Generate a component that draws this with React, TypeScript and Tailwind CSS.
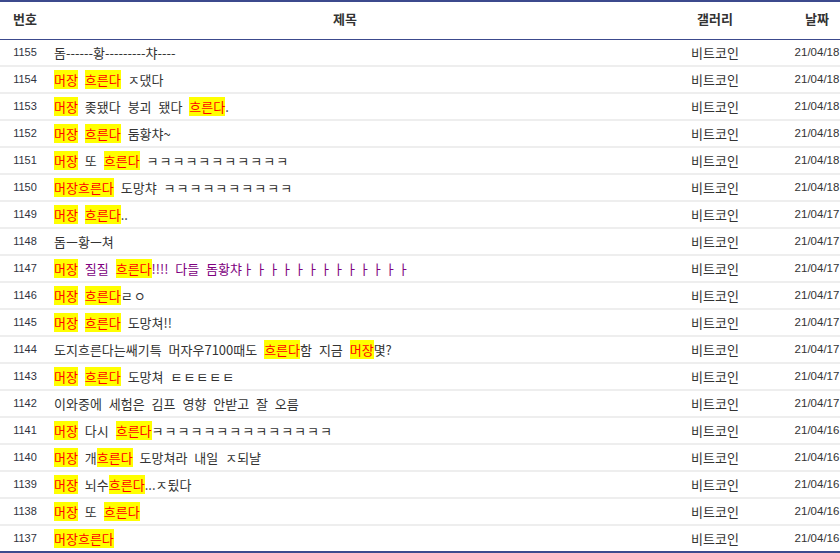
import React from 'react'

type Post = { no: number; title: string; date: string; color?: string }

// [..] 안은 하이라이트
const posts: Post[] = [
  { no: 1155, title: '돔------황---------챠----', date: '21/04/18' },
  { no: 1154, title: '[머장] [흐른다] ㅈ댔다', date: '21/04/18' },
  { no: 1153, title: '[머장] 좆됐다 붕괴 됐다 [흐른다].', date: '21/04/18' },
  { no: 1152, title: '[머장] [흐른다] 둠황챠~', date: '21/04/18' },
  { no: 1151, title: '[머장] 또 [흐른다] ㅋㅋㅋㅋㅋㅋㅋㅋㅋㅋㅋ', date: '21/04/18' },
  { no: 1150, title: '[머장흐른다] 도망챠 ㅋㅋㅋㅋㅋㅋㅋㅋㅋㅋ', date: '21/04/18' },
  { no: 1149, title: '[머장] [흐른다]..', date: '21/04/17' },
  { no: 1148, title: '돔ㅡ황ㅡ쳐', date: '21/04/17' },
  { no: 1147, title: '[머장] 질질 [흐른다]!!!! 다들 돔황챠ㅏㅏㅏㅏㅏㅏㅏㅏㅏㅏㅏㅏㅏ', date: '21/04/17', color: 'purple' },
  { no: 1146, title: '[머장] [흐른다]ㄹㅇ', date: '21/04/17' },
  { no: 1145, title: '[머장] [흐른다] 도망쳐!!', date: '21/04/17' },
  { no: 1144, title: '도지흐른다는쌔기특 머자우7100때도 [흐른다]함 지금 [머장]몇?', date: '21/04/17' },
  { no: 1143, title: '[머장] [흐른다] 도망쳐 ㅌㅌㅌㅌㅌ', date: '21/04/17' },
  { no: 1142, title: '이와중에 세험은 김프 영향 안받고 잘 오름', date: '21/04/17' },
  { no: 1141, title: '[머장] 다시 [흐른다]ㅋㅋㅋㅋㅋㅋㅋㅋㅋㅋㅋㅋㅋㅋ', date: '21/04/16' },
  { no: 1140, title: '[머장] 개[흐른다] 도망쳐라 내일 ㅈ되냘', date: '21/04/16' },
  { no: 1139, title: '[머장] 뇌수[흐른다]...ㅈ됬다', date: '21/04/16' },
  { no: 1138, title: '[머장] 또 [흐른다]', date: '21/04/16' },
  { no: 1137, title: '[머장흐른다]', date: '21/04/16' },
]

// 자모 연속(ㅋㅋㅋ, ㅏㅏㅏ)은 원본 글꼴처럼 조금 넓게
function Plain({ text }: { text: string }) {
  const runs = text.split(/([ㄱ-ㅎㅏ-ㅣ]{2,})/).filter(Boolean)
  return (
    <>
      {runs.map((r, i) =>
        /^[ㄱ-ㅎㅏ-ㅣ]{2,}$/.test(r) ? (
          <span key={i} className="tracking-[1px]">
            {r}
          </span>
        ) : (
          <span key={i}>{r}</span>
        )
      )}
    </>
  )
}

function Title({ text }: { text: string }) {
  const parts = text.split(/(\[[^\]]+\])/).filter(Boolean)
  return (
    <>
      {parts.map((p, i) =>
        p.startsWith('[') ? (
          <span key={i} className="bg-[#ffff00] text-[#ff0000]">
            {p.slice(1, -1)}
          </span>
        ) : (
          <Plain key={i} text={p} />
        )
      )}
    </>
  )
}

export default function App() {
  return (
    <div className="w-[840px] h-[553px] overflow-hidden bg-white font-['Noto_Sans_CJK_KR',sans-serif] text-[#333]">
      <div className="grid h-[40px] grid-cols-[50px_590px_150px_50px] items-center border-t-2 border-b border-[#3c4a8d] pb-[3px] text-[13px] font-bold text-[#333]">
        <div className="text-center">번호</div>
        <div className="text-center">제목</div>
        <div className="text-center">갤러리</div>
        <div className="pl-1 text-center">날짜</div>
      </div>
      {posts.map((p, i) => (
        <div
          key={p.no}
          className={
            i === posts.length - 1
              ? 'grid h-[27px] grid-cols-[50px_590px_150px_50px] items-center border-b-2 border-[#3c4a8d]'
              : 'grid h-[27px] grid-cols-[50px_590px_150px_50px] items-center border-b-2 border-[#eeeeee]'
          }
        >
          <div className="text-center font-['Liberation_Sans',sans-serif] text-[11px] text-[#2f3340]">{p.no}</div>
          <div
            className={
              p.color === 'purple'
                ? 'whitespace-nowrap pl-1 text-[13px] leading-[15px] text-[#800080] [word-spacing:4px]'
                : 'whitespace-nowrap pl-1 text-[13px] leading-[15px] text-[#333] [word-spacing:4px]'
            }
          >
            <Title text={p.title} />
          </div>
          <div className="text-center text-[13px] text-[#333]">비트코인</div>
          <div className="whitespace-nowrap pl-1 text-center font-['Liberation_Sans',sans-serif] text-[11.5px] text-[#333]">
            {p.date}
          </div>
        </div>
      ))}
    </div>
  )
}
